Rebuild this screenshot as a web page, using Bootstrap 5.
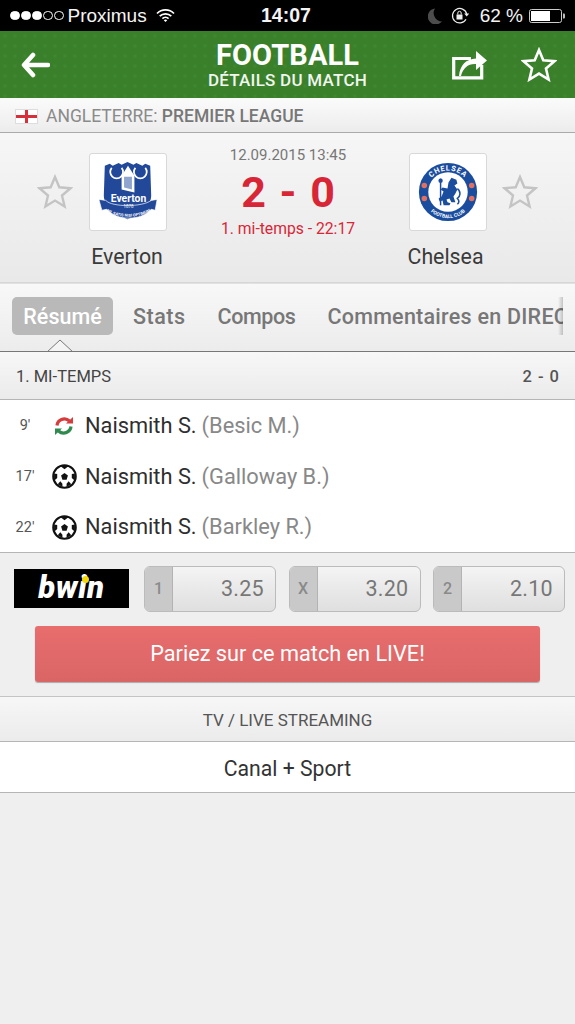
<!DOCTYPE html>
<html lang="fr">
<head>
<meta charset="utf-8">
<title>Football - Détails du match</title>
<link rel="stylesheet" href="https://cdn.jsdelivr.net/npm/bootstrap@5.3.0/dist/css/bootstrap.min.css">
<style>
html,body{height:100%}
body{width:575px;min-height:1024px;background:#efefef;font-family:Roboto,"Liberation Sans",sans-serif;color:#333;overflow:hidden}
.sbar{height:31px;background:#000;color:#f4f4f4;font-family:"Liberation Sans",Arial,sans-serif;font-size:19px;padding:0 10px 0 10px;line-height:31px}
.sbar .clock{position:absolute;left:261px;font-weight:700;font-size:19.500px}
.dots{display:flex;gap:1.500px;margin-right:4px}
.dots i{width:9.500px;height:9.500px;border-radius:50%;border:1px solid #fff;display:block}
.dots i.on{background:#fff}
.wifi{margin-left:9px}
.moon{margin-right:9px}
.pct{margin:0 6px 0 10px}
.hdr{height:67px;background-color:#3a7f2a;background-image:radial-gradient(circle at 50% 50%,#3f8630 0,#3f8630 1.200px,transparent 2.400px);background-size:10px 10px;color:#fff;padding:0 18px 0 21px;position:relative}
.hdr-title{position:absolute;left:0;right:0;top:8px;text-align:center;line-height:1}
.hdr-title b{display:block;font-size:29px;font-weight:700;letter-spacing:.1px;line-height:32px}
.hdr-title span{display:block;font-size:17px;font-weight:500;letter-spacing:.25px;line-height:18px;color:#f1f6ef}
.hdr-acts{gap:34px}
.league{height:35px;background:linear-gradient(#fbfbfb,#ececec);border-bottom:1px solid #aaa;padding:2px 0 0 15px;font-size:17.500px;color:#8a8a8a;gap:8px}
.league b{font-weight:500;color:#777}
.flag{width:23px;height:15px;background:#fff;border:1px solid #ddd;position:relative;display:block}
.flag:before{content:"";position:absolute;left:0;right:0;top:5px;height:3px;background:#d8303a}
.flag:after{content:"";position:absolute;top:0;bottom:0;left:9px;width:3px;background:#d8303a}
.match{height:150px;background:linear-gradient(#f6f6f6,#e9e9e9);border-bottom:1px solid #d6d6d6;position:relative}
.crest{width:78px;height:78px;background:#fff;border:1px solid #d8d8d8;border-radius:3px}
.teamcol{position:absolute;top:20px;width:110px;text-align:center}
.teamcol .crest{margin:0 auto}
.tname{font-size:21.300px;color:#3a3a3a;margin-top:13px;line-height:26px}
.tname.shift{padding-right:5px}
.tname.shift1{padding-right:2px}
.mstar{position:absolute;top:41px}
.mid{position:absolute;top:12px;left:196px;width:184px;text-align:center}
.mdate{font-size:15px;color:#777;line-height:20px}
.mscore{font-size:43px;font-weight:700;color:#d82637;line-height:50px;word-spacing:3px;margin-top:2px}
.mtime{font-size:15.700px;color:#d82637;line-height:20px;margin-top:2px}
.tabs{height:69px;background:linear-gradient(#f8f8f8,#ececec);border-top:1px solid #e2e2e2;border-bottom:1px solid #777;position:relative;padding-left:12px;overflow:hidden;white-space:nowrap;font-size:21.500px;font-weight:500;color:#777}
.tabs-inner{width:551px;overflow:hidden;padding-top:13px;height:60px}
.tabs-edge{position:absolute;left:558px;top:13px;width:5px;height:38px;background:linear-gradient(90deg,transparent,#0000002e 90%,transparent)}
.tb{height:38px;line-height:36px;padding:2px 11px 0;border-radius:5px;flex:none}
.tb.on{background:#b9b9b9;color:#fff;width:101px;margin-right:9px}
.tb-stats{letter-spacing:.5px;margin-right:10px}
.tb-compos{letter-spacing:-.4px;margin-right:10px}
.tb-comm{letter-spacing:.25px}
.notch{position:absolute;left:47px;bottom:-1px;width:26px;height:13px}
.sect{height:48px;background:linear-gradient(#f7f7f7,#ebebeb);border-bottom:1px solid #b5b5b5;padding:4px 15px 0 16px;font-size:16.500px;color:#444}
.sect b{font-weight:500;color:#555;letter-spacing:1px}
.evs{background:#fff;border-bottom:1px solid #b5b5b5;height:153px;padding-top:1px}
.ev{height:50.600px;font-size:21.800px;color:#2e2e2e}
.ev .mn{width:50px;text-align:center;font-size:14.500px;color:#555;flex:none}
.ev .ic{width:35px;display:flex;justify-content:center;flex:none;padding-right:7px}
.ev em{font-style:normal;color:#888;margin-left:5px}
.odds{height:144px;border-bottom:1px solid #c4c4c4;background:#efefef;padding:13px 0 0 14px}
.bwin{width:115px;height:39px;background:#000;color:#fff;font-style:italic;font-weight:900;font-size:31px;letter-spacing:.6px;line-height:38px;text-align:center;position:relative;flex:none;margin:3px 2.500px 0 0}
.bwin:after{content:"";position:absolute;left:68px;top:7px;width:7px;height:7px;border-radius:50%;background:#f5d90a}
.odd{height:46px;width:132px;border:1px solid #bbb;border-radius:6px;background:linear-gradient(#f4f4f4,#dfdfdf);overflow:hidden;color:#777;font-size:21.500px}
.odd span{width:28px;background:#c9c9c9;border-right:1px solid #b3b3b3;height:100%;font-size:16px;font-weight:500;color:#8a8a8a;display:flex;align-items:center;justify-content:center;flex:none}
.odd b{flex:1;text-align:right;padding-right:11px;font-weight:400;letter-spacing:.3px}
.oddsrow{gap:12.500px;margin-bottom:14px}
.live{display:block;width:505px;height:56px;margin:0 0 0 21px;border:0;border-radius:3px;background:linear-gradient(#e86d6d,#da6565);box-shadow:0 1px 1px #aaa;color:#fff;font-size:21.700px;padding:0}
.tvh{height:45px;background:linear-gradient(#f7f7f7,#ebebeb);border-bottom:1px solid #b5b5b5;font-size:17px;color:#555;padding-top:3px}
.tvr{height:51px;background:#fff;border-bottom:1px solid #b5b5b5;font-size:21.200px;color:#333;padding-top:3px}
</style>
</head>
<body>
<div class="sbar d-flex align-items-center position-relative">
  <span class="dots"><i class="on"></i><i class="on"></i><i class="on"></i><i></i><i></i></span>
  <span>Proximus</span>
  <svg class="wifi" width="19" height="15" viewBox="0 0 19 15"><path d="M1 5.500a12 12 0 0 1 17 0M3.700 8.200a8.200 8.200 0 0 1 11.600 0M6.400 10.700a4.400 4.400 0 0 1 6.200 0" fill="none" stroke="#fff" stroke-width="1.700"/><path d="M7.800 12.300a2.400 2.400 0 0 1 3.400 0L9.500 14z" fill="#fff"/></svg>
  <span class="clock">14:07</span>
  <span class="ms-auto d-flex align-items-center">
    <svg class="moon" width="14" height="16" viewBox="0 0 14 16"><path d="M7 .500A8 8 0 1 0 14 13.500 8.500 8.500 0 0 1 7 .500z" fill="#4c4c4c"/></svg>
    <svg width="19" height="17" viewBox="0 0 19 17"><path d="M15 12.200A7.200 7.200 0 1 1 15.700 7" fill="none" stroke="#eee" stroke-width="1.200"/><path d="M13.200 6.500h5l-2.500 3z" fill="#eee"/><rect x="5.500" y="7.500" width="6" height="5" fill="#eee"/><path d="M6.800 7.500V6a1.700 1.700 0 0 1 3.400 0v1.500" fill="none" stroke="#eee"/></svg>
    <span class="pct">62 %</span>
    <svg width="36" height="14" viewBox="0 0 36 14"><rect x=".5" y=".5" width="32" height="13" rx="2" fill="none" stroke="#ccc"/><rect x="2" y="2" width="19" height="10" fill="#fff"/><path d="M34 4.500h1a1 1 0 0 1 1 1v3a1 1 0 0 1-1 1h-1z" fill="#bbb"/></svg>
  </span>
</div>
<header class="hdr d-flex align-items-center">
  <svg width="29" height="26" viewBox="0 0 29 26"><path d="M12 3 3 13l9 10M4 13h23" fill="none" stroke="#fff" stroke-width="4.500" stroke-linecap="round" stroke-linejoin="round"/></svg>
  <div class="hdr-title"><b>FOOTBALL</b><span>DÉTAILS DU MATCH</span></div>
  <span class="ms-auto d-flex align-items-center hdr-acts">
    <svg width="35" height="30" viewBox="0 0 35 30"><path d="M19 8.500H1.700v19.300h28V15" fill="none" stroke="#fff" stroke-width="3.200"/><path d="M7 26c1-11 7-17 17-17.500V1l11 9.500L24 20v-6c-8-.5-13 4-15 12z" fill="#fff"/></svg>
    <svg width="36" height="36" viewBox="0 0 36 36"><path d="M18 3l4.300 10.300 11.200.9-8.500 7.300 2.600 11L18 26.600 8.400 32.500l2.600-11-8.500-7.300 11.200-.9z" fill="none" stroke="#fff" stroke-width="2.600"/></svg>
  </span>
</header>
<div class="league d-flex align-items-center">
  <i class="flag"></i>
  <span>ANGLETERRE: <b>PREMIER LEAGUE</b></span>
</div>
<section class="match">
  <svg class="mstar" style="left:37px" width="36" height="36" viewBox="0 0 36 36"><path d="M18 3l4.300 10.300 11.200.9-8.500 7.300 2.600 11L18 26.600 8.400 32.500l2.600-11-8.500-7.300 11.200-.9z" fill="none" stroke="#c4c4c4" stroke-width="2.400"/></svg>
  <div class="teamcol" style="left:73px">
    <div class="crest d-flex align-items-center justify-content-center">
      <svg width="76" height="76" viewBox="1 1 77 77">
        <path d="M16 13l5-2 3 2 6-3 3 2 6-3 6 3 3-2 6 3 3-2 5 2 1 30c0 11-12 19-24 24-12-5-24-13-24-24z" fill="#22489a"/>
        <path d="M10 47l7 1c6 7 37 7 46 0l6-1-2 11-4-1c-10 12-35 12-45 0l-5 1z" fill="#22489a" stroke="#fff" stroke-width=".7"/>
        <path d="M33 23l6.500-10 6.500 10v17l-13-3z" fill="#fff"/><path d="M35.500 24h8v13l-8-2z" fill="#8fa5cf"/>
        <path d="M23 15a6.500 6.500 0 1 0 10 0M47 15a6.500 6.500 0 1 0 10 0" fill="none" stroke="#fff" stroke-width="1.800"/>
        <text x="40" y="50" text-anchor="middle" font-family="Roboto" font-weight="700" font-size="10.500" fill="#fff">Everton</text>
        <text x="40" y="56" text-anchor="middle" font-family="Roboto" font-size="4.500" fill="#fff">1878</text>
        <path id="evb" d="M15 57c12 10 38 10 50 0" fill="none"/>
        <text font-family="Roboto" font-weight="700" font-size="4" fill="#fff" text-anchor="middle"><textPath href="#evb" startOffset="50%">NIL SATIS NISI OPTIMUM</textPath></text>
      </svg>
    </div>
    <div class="tname shift1">Everton</div>
  </div>
  <div class="mid">
    <div class="mdate">12.09.2015 13:45</div>
    <div class="mscore">2 - 0</div>
    <div class="mtime">1. mi-temps - 22:17</div>
  </div>
  <div class="teamcol" style="left:393px">
    <div class="crest d-flex align-items-center justify-content-center">
      <svg width="76" height="76" viewBox="1 1 77 77">
        <circle cx="39.500" cy="39.500" r="29.500" fill="#1b4d9e"/>
        <circle cx="39.500" cy="39.500" r="20" fill="#fff"/>
        <circle cx="15.500" cy="33" r="2.800" fill="#e2705f"/><circle cx="63.500" cy="33" r="2.800" fill="#e2705f"/><circle cx="15.500" cy="46" r="2.800" fill="#e2705f"/><circle cx="63.500" cy="46" r="2.800" fill="#e2705f"/>
        <path d="M32 26v27" fill="none" stroke="#1b4d9e" stroke-width="1.500"/><circle cx="32" cy="28" r="2.200" fill="#1b4d9e"/>
        <path d="M34 35l5 1 1-6 3-5 5 2 1 4-3 2 3 4-2 4-2 3 2 6h-4l-2-4-3 1 1 3 3 1-1 2h-6l-1-5-3 1-1-3 3-2 2-5-3-2z" fill="#1b4d9e"/>
        <path d="M49 36c4 3 3 8 0 10 2 2 2 4 0 6" fill="none" stroke="#1b4d9e" stroke-width="1.500"/>
        <path id="cht" d="M17 36a23 23 0 0 1 45 0" fill="none"/>
        <text font-family="Roboto" font-weight="700" font-size="7.500" fill="#fff" letter-spacing=".8" text-anchor="middle"><textPath href="#cht" startOffset="50%">CHELSEA</textPath></text>
        <path id="chb" d="M14 45a26 26 0 0 0 51 0" fill="none"/>
        <text font-family="Roboto" font-weight="700" font-size="5" fill="#fff" text-anchor="middle"><textPath href="#chb" startOffset="50%">FOOTBALL CLUB</textPath></text>
      </svg>
    </div>
    <div class="tname shift">Chelsea</div>
  </div>
  <svg class="mstar" style="left:502px" width="36" height="36" viewBox="0 0 36 36"><path d="M18 3l4.300 10.300 11.200.9-8.500 7.300 2.600 11L18 26.600 8.400 32.500l2.600-11-8.500-7.300 11.200-.9z" fill="none" stroke="#c4c4c4" stroke-width="2.400"/></svg>
</section>
<nav class="tabs">
  <div class="tabs-inner d-flex">
    <span class="tb on text-center">Résumé</span>
    <span class="tb tb-stats">Stats</span>
    <span class="tb tb-compos">Compos</span>
    <span class="tb tb-comm">Commentaires en DIRECT</span>
  </div>
  <i class="tabs-edge"></i>
  <svg class="notch" viewBox="0 0 26 13"><path d="M0 13 13 1l13 12" fill="#f4f4f4" stroke="#777"/></svg>
</nav>
<div class="sect d-flex align-items-center justify-content-between"><span>1. MI-TEMPS</span><b>2 - 0</b></div>
<div class="evs">
  <div class="ev d-flex align-items-center"><span class="mn">9'</span><span class="ic"><svg width="20" height="20" viewBox="0 0 20 20"><path d="M3 9.500C3.500 4 10.500 .5 15.500 5" fill="none" stroke="#d63c3c" stroke-width="3.200"/><path d="M12 7.500h7V1z" fill="#d63c3c"/><path d="M17 10.500c-.5 5.500-7.500 9-12.500 4.500" fill="none" stroke="#2f8a4e" stroke-width="3.200"/><path d="M8 12.500H1V19z" fill="#2f8a4e"/></svg></span><span>Naismith S.</span><em>(Besic M.)</em></div>
  <div class="ev d-flex align-items-center"><span class="mn">17'</span><span class="ic"><svg width="25" height="25" viewBox="0 0 24 24"><circle cx="12" cy="12" r="10.800" fill="#fff" stroke="#111" stroke-width="2"/><path d="M12 8.700l3.300 2.400-1.300 3.900H10l-1.300-3.900z" fill="#111"/><path d="M8 2l8 0-4 3zM22 9l0 7-3-2.500 0-4zM2 9l0 7 3-2.500 0-4zM5.500 19.500l4.500 2.500 0-3-2-2.500zM18.500 19.500L14 22l0-3 2-2.500z" fill="#111"/></svg></span><span>Naismith S.</span><em>(Galloway B.)</em></div>
  <div class="ev d-flex align-items-center"><span class="mn">22'</span><span class="ic"><svg width="25" height="25" viewBox="0 0 24 24"><circle cx="12" cy="12" r="10.800" fill="#fff" stroke="#111" stroke-width="2"/><path d="M12 8.700l3.300 2.400-1.300 3.900H10l-1.300-3.900z" fill="#111"/><path d="M8 2l8 0-4 3zM22 9l0 7-3-2.500 0-4zM2 9l0 7 3-2.500 0-4zM5.500 19.500l4.500 2.500 0-3-2-2.500zM18.500 19.500L14 22l0-3 2-2.500z" fill="#111"/></svg></span><span>Naismith S.</span><em>(Barkley R.)</em></div>
</div>
<div class="odds">
  <div class="d-flex oddsrow">
    <div class="bwin">bwin</div>
    <div class="odd d-flex align-items-center"><span>1</span><b>3.25</b></div>
    <div class="odd d-flex align-items-center"><span>X</span><b>3.20</b></div>
    <div class="odd d-flex align-items-center"><span>2</span><b>2.10</b></div>
  </div>
  <button class="live" type="button">Pariez sur ce match en LIVE!</button>
</div>
<div class="tvh d-flex align-items-center justify-content-center">TV / LIVE STREAMING</div>
<div class="tvr d-flex align-items-center justify-content-center">Canal + Sport</div>
</body>
</html>
